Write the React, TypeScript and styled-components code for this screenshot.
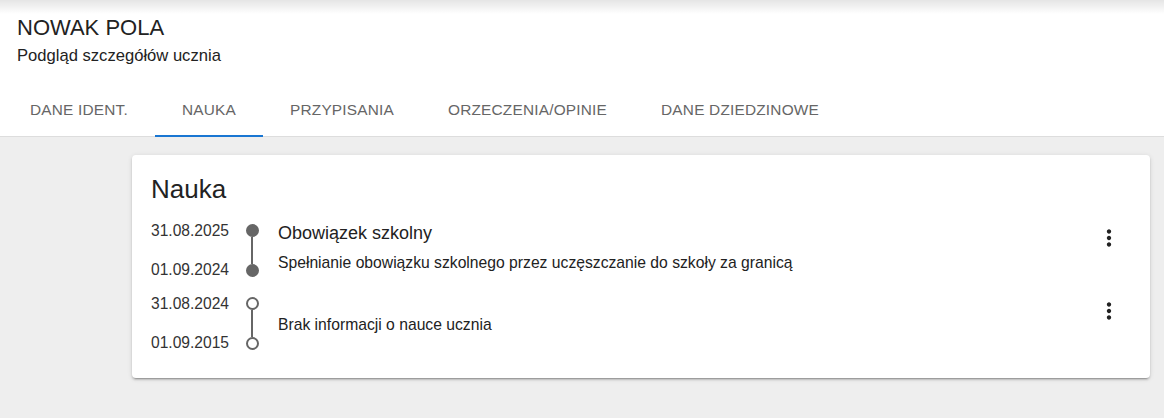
import React from "react";
import styled, { createGlobalStyle } from "styled-components";

type Entry = {
  from: string;
  to: string;
  title?: string;
  description: string;
  filled: boolean;
};

const entries: Entry[] = [
  {
    from: "01.09.2024",
    to: "31.08.2025",
    title: "Obowiązek szkolny",
    description:
      "Spełnianie obowiązku szkolnego przez uczęszczanie do szkoły za granicą",
    filled: true,
  },
  {
    from: "01.09.2015",
    to: "31.08.2024",
    description: "Brak informacji o nauce ucznia",
    filled: false,
  },
];

const tabs = ["DANE IDENT.", "NAUKA", "PRZYPISANIA", "ORZECZENIA/OPINIE", "DANE DZIEDZINOWE"];

function MoreIcon() {
  return (
    <svg width="26" height="26" viewBox="0 0 24 24" fill="#222">
      <path d="M12 8c1.1 0 2-.9 2-2s-.9-2-2-2-2 .9-2 2 .9 2 2 2zm0 2c-1.1 0-2 .9-2 2s.9 2 2 2 2-.9 2-2-.9-2-2-2zm0 6c-1.1 0-2 .9-2 2s.9 2 2 2 2-.9 2-2-.9-2-2-2z" />
    </svg>
  );
}

function App() {
  return (
    <>
      <GlobalStyle />
      <Page>
        <Header>
          <Title>NOWAK POLA</Title>
          <Subtitle>Podgląd szczegółów ucznia</Subtitle>
          <Tabs>
            {tabs.map((t) => (
              <Tab key={t} $active={t === "NAUKA"}>
                {t}
              </Tab>
            ))}
          </Tabs>
        </Header>
        <Body>
          <Card>
            <CardTitle>Nauka</CardTitle>
            <List>
              {entries.map((e) => (
                <EntryRow key={e.to}>
                  <Dates>
                    <DateText>{e.to}</DateText>
                    <DateText>{e.from}</DateText>
                  </Dates>
                  <Track>
                    <Dot $filled={e.filled} />
                    <Line />
                    <Dot $filled={e.filled} />
                  </Track>
                  <Content $centered={!e.title}>
                    {e.title && <EntryTitle>{e.title}</EntryTitle>}
                    <Description>{e.description}</Description>
                  </Content>
                  <MenuButton>
                    <MoreIcon />
                  </MenuButton>
                </EntryRow>
              ))}
            </List>
          </Card>
        </Body>
      </Page>
    </>
  );
}

const GlobalStyle = createGlobalStyle`
  html, body {
    margin: 0;
    padding: 0;
    background: #eeeeee;
    font-family: "Liberation Sans", Arial, sans-serif;
  }
`;

const Page = styled.div`
  min-height: 418px;
  background: #eeeeee;
`;

const Header = styled.div`
  background: linear-gradient(to bottom, rgba(0, 0, 0, 0.1), rgba(0, 0, 0, 0) 14px), #ffffff;
  border-bottom: 1px solid #dddddd;
  padding-top: 14px;
`;

const Title = styled.h1`
  margin: 0 0 0 17px;
  font-size: 22px;
  font-weight: 400;
  line-height: 28px;
  color: #222222;
`;

const Subtitle = styled.p`
  margin: 4px 0 0 17px;
  font-size: 16.6px;
  line-height: 20px;
  color: #222222;
`;

const Tabs = styled.div`
  display: flex;
  margin-top: 23px;
  padding-left: 3px;
`;

const Tab = styled.div<{ $active: boolean }>`
  height: 48px;
  box-sizing: border-box;
  display: flex;
  align-items: center;
  padding: 0 27px 5px;
  font-size: 15.4px;
  letter-spacing: 0.2px;
  color: #666666;
  border-bottom: 2px solid ${(p) => (p.$active ? "#1976d2" : "transparent")};
  margin-bottom: -1px;
`;

const Body = styled.div`
  padding: 18px 14px 0 132px;
`;

const Card = styled.div`
  background: #ffffff;
  border-radius: 4px;
  box-shadow: 0px 3px 1px -2px rgba(0, 0, 0, 0.2), 0px 2px 2px 0px rgba(0, 0, 0, 0.14),
    0px 1px 5px 0px rgba(0, 0, 0, 0.12);
  padding: 18px 28px 28px 19px;
`;

const CardTitle = styled.h2`
  margin: 0;
  font-size: 26px;
  font-weight: 400;
  line-height: 32px;
  color: #222222;
`;

const List = styled.div`
  display: flex;
  flex-direction: column;
  gap: 20px;
  margin-top: 19px;
`;

const EntryRow = styled.div`
  display: grid;
  grid-template-columns: 94.5px 13px 1fr 26px;
  height: 53px;
`;

const Dates = styled.div`
  display: flex;
  flex-direction: column;
  justify-content: space-between;
`;

const DateText = styled.span`
  font-size: 15.6px;
  line-height: 14px;
  color: #333333;
`;

const Track = styled.div`
  display: flex;
  flex-direction: column;
  align-items: center;
`;

const Dot = styled.div<{ $filled: boolean }>`
  width: 13px;
  height: 13px;
  box-sizing: border-box;
  border-radius: 50%;
  border: 2px solid #666666;
  background: ${(p) => (p.$filled ? "#666666" : "#ffffff")};
  flex: none;
`;

const Line = styled.div`
  flex: 1;
  width: 2px;
  background: #666666;
`;

const Content = styled.div<{ $centered: boolean }>`
  display: flex;
  flex-direction: column;
  gap: 9px;
  margin-left: 19.5px;
  align-self: ${(p) => (p.$centered ? "center" : "start")};
  margin-top: ${(p) => (p.$centered ? "2px" : "-2px")};
`;

const EntryTitle = styled.span`
  font-size: 18px;
  line-height: 22px;
  color: #222222;
`;

const Description = styled.span`
  font-size: 15.7px;
  line-height: 20px;
  color: #222222;
`;

const MenuButton = styled.div`
  width: 26px;
  height: 26px;
  margin-top: 1px;
  display: flex;
`;

export default App;
